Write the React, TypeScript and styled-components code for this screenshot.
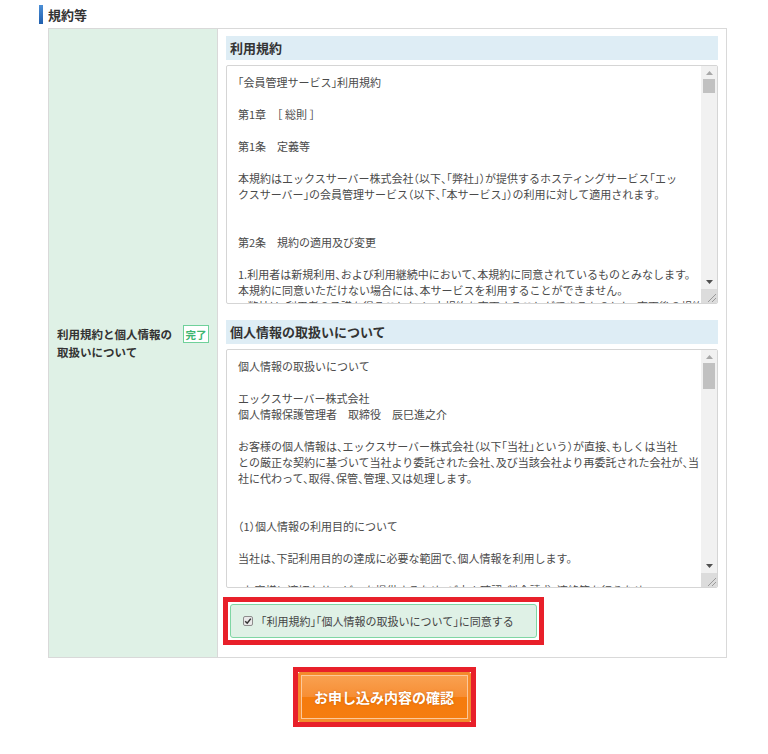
import styled, { createGlobalStyle } from 'styled-components';

const GlobalStyle = createGlobalStyle`
  html, body {
    margin: 0;
    padding: 0;
    background: #fff;
  }
  body {
    font-family: "Noto Sans CJK JP", "Noto Sans", sans-serif;
    color: #333;
  }
`;

const Page = styled.div`
  width: 768px;
  padding: 5px 41px 0 39px;
  box-sizing: border-box;
`;

const SectionTitle = styled.h2`
  display: flex;
  align-items: center;
  gap: 5px;
  margin: 0 0 4px;
  height: 19px;
  font-size: 13px;
  font-weight: bold;
  line-height: 19px;
  color: #333;

  &::before {
    content: '';
    display: block;
    width: 4px;
    height: 19px;
    background: linear-gradient(to bottom, #4c8fd6, #1f5fae);
  }
`;

const Table = styled.div`
  display: grid;
  grid-template-columns: 169px minmax(0, 1fr);
  margin-left: 9px;
  border: 1px solid #d9d9d9;
`;

const LabelCell = styled.div`
  display: flex;
  align-items: center;
  padding: 0 8px;
  background: #dff1e6;
  border-right: 1px solid #d9d9d9;
`;

const LabelRow = styled.div`
  display: flex;
  width: 100%;
  justify-content: space-between;
  align-items: flex-start;
`;

const Label = styled.div`
  font-size: 11.5px;
  font-weight: bold;
  line-height: 18px;
  color: #333;
  font-feature-settings: 'halt';
`;

const Badge = styled.span`
  display: flex;
  align-items: center;
  justify-content: center;
  width: 26px;
  height: 18px;
  box-sizing: border-box;
  border: 1px solid #6fd19a;
  background: #fff;
  color: #3cb56f;
  font-size: 10.5px;
  font-weight: bold;
`;

const ContentCell = styled.div`
  display: flex;
  flex-direction: column;
  min-width: 0;
  padding: 7px 8px 12px 8px;
`;

const DocTitle = styled.h3<{ $top?: number }>`
  margin: ${(p) => p.$top ?? 0}px 0 5px;
  height: 24px;
  padding: 0 4px;
  background: #deedf5;
  font-size: 13px;
  font-weight: bold;
  line-height: 24px;
  color: #333;
`;

const Box = styled.div`
  display: flex;
  height: 239px;
  box-sizing: border-box;
  border: 1px solid #d5d5d5;
  border-radius: 2px;
  background: #fff;
  overflow: hidden;
`;

const BoxText = styled.div`
  flex: 1;
  min-width: 0;
  overflow: hidden;
  padding: 8px 10px 0 11px;
  font-size: 11px;
  line-height: 16px;
  color: #4a4a4a;
  white-space: pre;
  font-feature-settings: 'halt';
`;

const ScrollBar = styled.div`
  display: flex;
  flex-direction: column;
  flex-shrink: 0;
  width: 16px;
  background: #f1f1f1;
`;

const Arrow = styled.div<{ $h: number }>`
  display: flex;
  align-items: center;
  justify-content: center;
  height: ${(p) => p.$h}px;
`;

const Track = styled.div`
  flex: 1;
  padding: 0 2px;
`;

const Thumb = styled.div<{ $h: number }>`
  height: ${(p) => p.$h}px;
  background: #c1c1c1;
`;

const Grip = styled.div`
  display: flex;
  align-items: flex-end;
  justify-content: flex-end;
  height: 14px;
  background: #dcdcdc;
`;

const Frame = styled.div<{ $gap: number }>`
  border: 5px solid #e8202a;
  padding: ${(p) => p.$gap}px;
  background: #fff;
`;

const AgreeFrame = styled(Frame)`
  align-self: flex-start;
  margin: 9px 0 0 -3px;
`;

const AgreeBox = styled.label`
  display: flex;
  align-items: center;
  gap: 8px;
  width: 307px;
  height: 34px;
  box-sizing: border-box;
  padding-left: 12px;
  border: 1px solid #7fd6a4;
  border-radius: 3px;
  background: #dff1e6;
  font-size: 11px;
  color: #444;
  font-feature-settings: 'halt';
`;

const Check = styled.span`
  display: flex;
  align-items: center;
  justify-content: center;
  width: 10px;
  height: 10px;
  box-sizing: border-box;
  border: 1px solid #8d8d8d;
  border-radius: 2px;
  background: #e9e9e9;
`;

const ButtonRow = styled.div`
  display: flex;
  justify-content: center;
  margin: 9px -41px 0 -39px;
`;

const Button = styled.button`
  display: block;
  width: 173px;
  height: 50px;
  border: 1px solid #f08a2e;
  border-radius: 2px;
  background: linear-gradient(to bottom, #f9a354 0%, #f78e34 50%, #f57b0d 51%, #f57d10 100%);
  box-shadow: inset 0 0 0 2px #f68a2a, inset 0 0 0 3px #fcc89a;
  color: #fff;
  font-family: "Noto Sans CJK JP", sans-serif;
  font-size: 14px;
  font-weight: bold;
  text-shadow: 0 0 2px rgba(160, 70, 0, 0.5);
  cursor: pointer;
`;

const UpIcon = () => (
  <svg width="7" height="4" viewBox="0 0 7 4">
    <path d="M0 4 L3.5 0 L7 4 Z" fill="#a8a8a8" />
  </svg>
);

const DownIcon = () => (
  <svg width="7" height="4" viewBox="0 0 7 4">
    <path d="M0 0 L7 0 L3.5 4 Z" fill="#505050" />
  </svg>
);

const GripIcon = () => (
  <svg width="12" height="12" viewBox="0 0 12 12">
    <path d="M11 3 L3 11 M11 7 L7 11" stroke="#9a9a9a" strokeWidth="1" />
  </svg>
);

function TextBox({ text, thumb }: { text: string; thumb: number }) {
  return (
    <Box>
      <BoxText>{text}</BoxText>
      <ScrollBar>
        <Arrow $h={13}>
          <UpIcon />
        </Arrow>
        <Track>
          <Thumb $h={thumb} />
        </Track>
        <Arrow $h={15}>
          <DownIcon />
        </Arrow>
        <Grip>
          <GripIcon />
        </Grip>
      </ScrollBar>
    </Box>
  );
}

const terms = `「会員管理サービス」利用規約

第1章　［ 総則 ］

第1条　定義等

本規約はエックスサーバー株式会社（以下、「弊社」）が提供するホスティングサービス「エッ
クスサーバー」の会員管理サービス（以下、「本サービス」）の利用に対して適用されます。


第2条　規約の適用及び変更

1.利用者は新規利用、および利用継続中において、本規約に同意されているものとみなします。
本規約に同意いただけない場合には、本サービスを利用することができません。
2.弊社は、利用者の承諾を得ることなく、本規約を変更することができるものとし、変更後の規約`;

const privacy = `個人情報の取扱いについて

エックスサーバー株式会社
個人情報保護管理者　取締役　辰巳進之介

お客様の個人情報は、エックスサーバー株式会社（以下「当社」という）が直接、もしくは当社
との厳正な契約に基づいて当社より委託された会社、及び当該会社より再委託された会社が、当
社に代わって、取得、保管、管理、又は処理します。


（1）個人情報の利用目的について

当社は、下記利用目的の達成に必要な範囲で、個人情報を利用します。

・お客様に適切なサービスを提供するため、ご本人確認、料金請求、連絡等を行うため`;

export default function App() {
  return (
    <>
      <GlobalStyle />
      <Page>
        <SectionTitle>規約等</SectionTitle>
        <Table>
          <LabelCell>
            <LabelRow>
              <Label>
                利用規約と個人情報の
                <br />
                取扱いについて
              </Label>
              <Badge>完了</Badge>
            </LabelRow>
          </LabelCell>
          <ContentCell>
            <DocTitle>利用規約</DocTitle>
            <TextBox text={terms} thumb={14} />
            <DocTitle $top={16}>個人情報の取扱いについて</DocTitle>
            <TextBox text={privacy} thumb={26} />
            <AgreeFrame $gap={2}>
              <AgreeBox>
                <Check>
                  <svg width="8" height="8" viewBox="0 0 8 8">
                    <path d="M1.2 4.2 L3.2 6.2 L6.8 1.6" fill="none" stroke="#333" strokeWidth="1.5" />
                  </svg>
                </Check>
                「利用規約」「個人情報の取扱いについて」に同意する
              </AgreeBox>
            </AgreeFrame>
          </ContentCell>
        </Table>
        <ButtonRow>
          <Frame $gap={0}>
            <Button type="button">お申し込み内容の確認</Button>
          </Frame>
        </ButtonRow>
      </Page>
    </>
  );
}
